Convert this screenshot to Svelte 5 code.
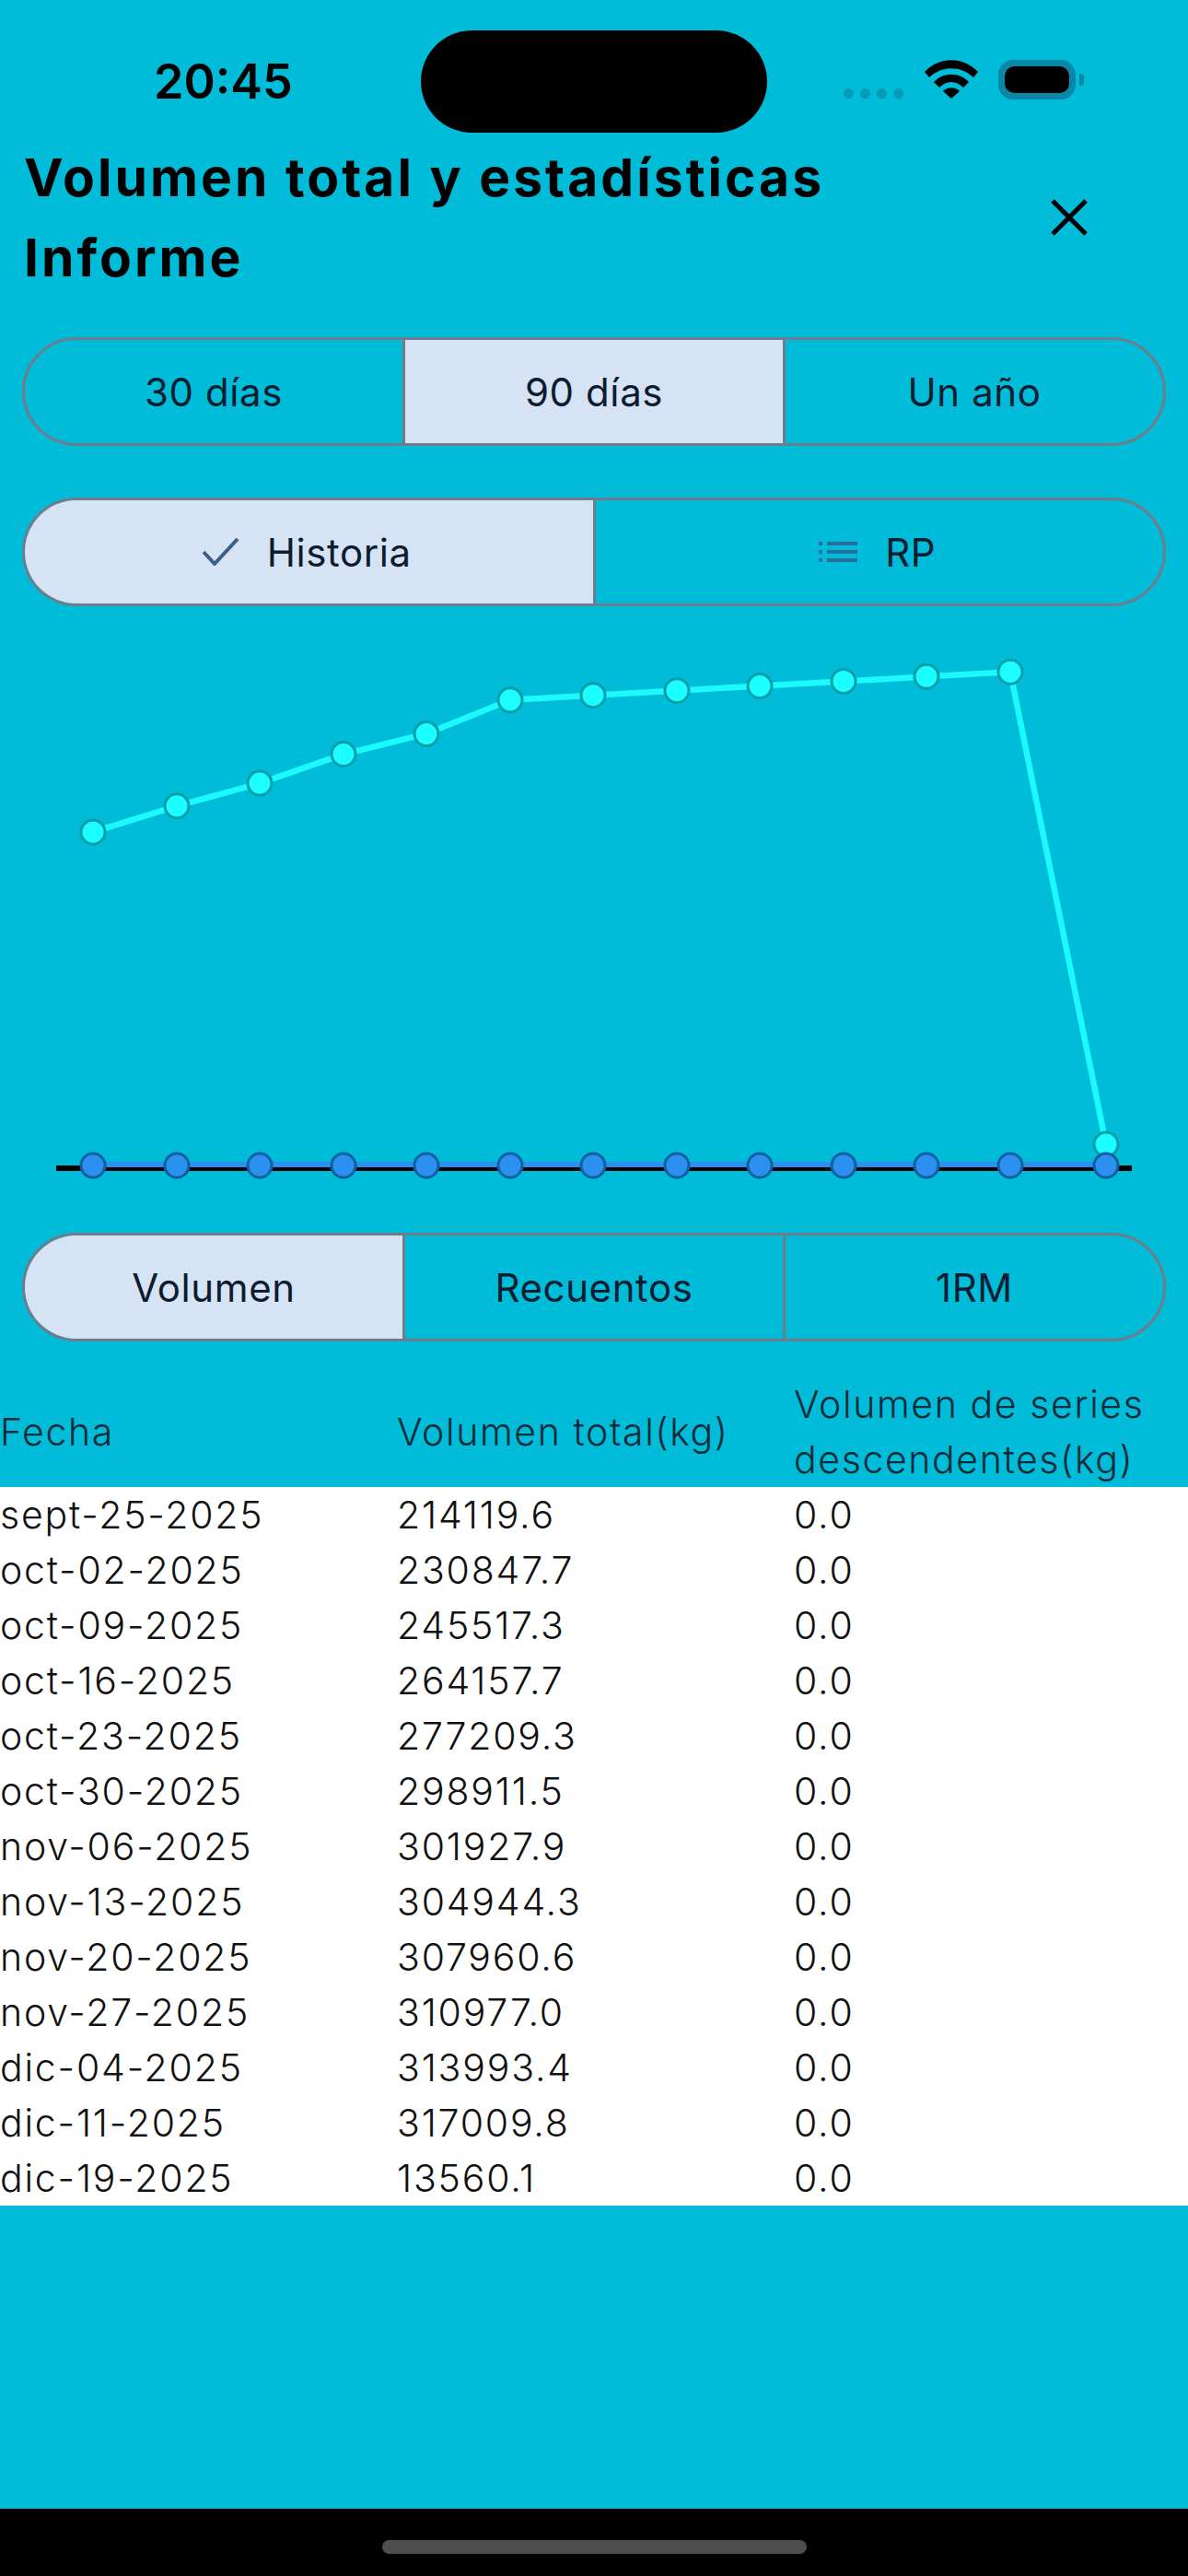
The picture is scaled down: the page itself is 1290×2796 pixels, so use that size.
<script>
	const rows = [
		['sept-25-2025', 214119.6],
		['oct-02-2025', 230847.7],
		['oct-09-2025', 245517.3],
		['oct-16-2025', 264157.7],
		['oct-23-2025', 277209.3],
		['oct-30-2025', 298911.5],
		['nov-06-2025', 301927.9],
		['nov-13-2025', 304944.3],
		['nov-20-2025', 307960.6],
		['nov-27-2025', 310977.0],
		['dic-04-2025', 313993.4],
		['dic-11-2025', 317009.8],
		['dic-19-2025', 13560.1]
	];

	const BASE_Y = 1266;
	const SCALE = 0.00169;
	const xs = [101, 192, 282, 373, 463, 554, 644, 735, 825, 916, 1006, 1097, 1201];

	const points = rows.map((r, i) => ({ x: xs[i], y: BASE_Y - r[1] * SCALE }));
	const line = points.map((p) => `${p.x},${p.y.toFixed(1)}`).join(' ');

	const ranges = ['30 días', '90 días', 'Un año'];
	const metrics = ['Volumen', 'Recuentos', '1RM'];
</script>

<div class="page">
	<div class="status">
		<span class="time">20:45</span>
		<div class="island"></div>
		<div class="status-icons">
			<div class="signal"><i></i><i></i><i></i><i></i></div>
			<svg class="wifi" width="58" height="42" viewBox="0 0 58 42">
				<path d="M0 13 C16 -4 42 -4 58 13 L53 19 C39 6 19 6 5 19 Z" fill="#000" />
				<path d="M10 24 C20 13 38 13 48 24 L42 30 C34 22 24 22 16 30 Z" fill="#000" />
				<path d="M20 34 C25 29 33 29 38 34 L29 42 Z" fill="#000" />
			</svg>
			<div class="battery"><div class="battery-fill"></div></div>
			<div class="battery-nub"></div>
		</div>
	</div>

	<header>
		<h1>Volumen total y estadísticas Informe</h1>
		<svg class="close" width="40" height="40" viewBox="0 0 40 40">
			<path d="M2 2 L38 38 M38 2 L2 38" stroke="#000" stroke-width="5" fill="none" />
		</svg>
	</header>

	<div class="seg first">
		{#each ranges as label, i}
			<button class:on={i === 1}>{label}</button>
		{/each}
	</div>

	<div class="seg second">
		<button class="on">
			<svg width="40" height="30" viewBox="0 0 40 30">
				<path d="M1 15 L13 28 L38 1" stroke="#3d5f85" stroke-width="4" fill="none" />
			</svg>
			Historia
		</button>
		<button>
			<svg width="42" height="24" viewBox="0 0 42 24">
				<g fill="#2a6c9c">
					<rect x="0" y="1" width="4" height="4" />
					<rect x="9" y="1" width="33" height="4" />
					<rect x="0" y="10" width="4" height="4" />
					<rect x="9" y="10" width="33" height="4" />
					<rect x="0" y="19" width="4" height="4" />
					<rect x="9" y="19" width="33" height="4" />
				</g>
			</svg>
			RP
		</button>
	</div>

	<svg class="chart" width="1290" height="620" viewBox="0 690 1290 620">
		<rect x="61" y="1266" width="1168" height="6" fill="#000" />
		<line x1="101" y1="1265" x2="1201" y2="1265" stroke="#2b90f0" stroke-width="6" />
		<polyline points={line} fill="none" stroke="#1cfaff" stroke-width="6.5" />
		{#each points as p}
			<circle cx={p.x} cy={p.y} r="13" fill="#1cfdff" stroke="#0a9fa8" stroke-width="3" />
		{/each}
		{#each points as p}
			<circle cx={p.x} cy={BASE_Y} r="13" fill="#2b90f0" stroke="#115f9f" stroke-width="3" />
		{/each}
	</svg>

	<div class="seg third">
		{#each metrics as label, i}
			<button class:on={i === 0}>{label}</button>
		{/each}
	</div>

	<div class="table-head">
		<div>Fecha</div>
		<div>Volumen total(kg)</div>
		<div>Volumen de series descendentes(kg)</div>
	</div>
	<div class="table-body">
		{#each rows as r}
			<div class="row">
				<div>{r[0]}</div>
				<div>{r[1].toFixed(1)}</div>
				<div>0.0</div>
			</div>
		{/each}
	</div>

	<div class="spacer"></div>
	<div class="home"><div class="home-bar"></div></div>
</div>

<style>
	:global(body) {
		margin: 0;
		background: #00bcd9;
	}

	.page {
		height: 2796px;
		display: flex;
		flex-direction: column;
		background: #00bcd9;
		font-family: Inter, 'Liberation Sans', sans-serif;
		color: #000;
		overflow: hidden;
	}

	.status {
		height: 144px;
		padding-top: 33px;
		box-sizing: border-box;
		display: flex;
		align-items: flex-start;
		flex: none;
	}

	.time {
		margin: 24px 0 0 167px;
		width: 290px;
		font-size: 52px;
		font-weight: 600;
		line-height: 64px;
	}

	.island {
		width: 376px;
		height: 111px;
		border-radius: 56px;
		background: #000;
	}

	.status-icons {
		margin: 32px 0 0 83px;
		display: flex;
		align-items: flex-start;
	}

	.signal {
		display: flex;
		gap: 7px;
		margin: 31px 23px 0 0;
	}

	.signal i {
		width: 11px;
		height: 11px;
		border-radius: 50%;
		background: #079ab8;
	}

	.battery {
		margin-left: 22px;
		width: 84px;
		height: 43px;
		box-sizing: border-box;
		border: 7px solid #0a87a6;
		border-radius: 16px;
	}

	.battery-fill {
		height: 100%;
		border-radius: 10px;
		background: #000;
	}

	.battery-nub {
		width: 5px;
		height: 13px;
		margin: 15px 0 0 4px;
		border-radius: 0 4px 4px 0;
		background: #0a87a6;
	}

	header {
		display: flex;
		align-items: center;
		justify-content: space-between;
		padding: 0 109px 0 26px;
		margin-top: 5px;
		flex: none;
	}

	h1 {
		margin: 0;
		width: 900px;
		font-size: 57px;
		line-height: 87px;
		font-weight: 650;
		letter-spacing: 3px;
	}

	.seg {
		display: flex;
		margin: 0 24px;
		height: 118px;
		box-sizing: border-box;
		border: 3px solid #6f7c8c;
		border-radius: 59px;
		overflow: hidden;
		flex: none;
	}

	.first {
		margin-top: 43px;
	}

	.second {
		margin-top: 56px;
	}

	.second button {
		gap: 30px;
		padding-right: 4px;
	}

	.chart {
		display: block;
		margin-top: 31px;
		flex: none;
	}

	.third {
		margin-top: 29px;
	}

	button {
		flex: 1 1 0;
		display: flex;
		align-items: center;
		justify-content: center;
		background: none;
		border: 0;
		padding: 0;
		font: inherit;
		font-size: 42px;
		font-weight: 400;
		letter-spacing: 0.6px;
		color: #0d1c2e;
	}

	button + button {
		border-left: 3px solid #6f7c8c;
	}

	button.on {
		background: #d6e3f5;
	}

	.table-head {
		display: grid;
		grid-template-columns: 431px 431px 428px;
		align-items: center;
		height: 158px;
		padding-top: 38px;
		box-sizing: border-box;
		font-size: 41px;
		font-weight: 300;
		letter-spacing: 1.6px;
		line-height: 60px;
		color: #0c2a36;
		flex: none;
	}

	.table-body {
		background: #fff;
		flex: none;
	}

	.row {
		display: grid;
		grid-template-columns: 431px 431px 428px;
		height: 60px;
		align-items: center;
		font-size: 41px;
		font-weight: 300;
		letter-spacing: 1.8px;
		line-height: 60px;
		color: #111;
	}

	.spacer {
		flex: 1;
	}

	.home {
		height: 73px;
		background: #000;
		display: flex;
		justify-content: center;
		padding-top: 34px;
		box-sizing: border-box;
		flex: none;
	}

	.home-bar {
		width: 461px;
		height: 15px;
		border-radius: 8px;
		background: #4e4e4e;
	}
</style>
